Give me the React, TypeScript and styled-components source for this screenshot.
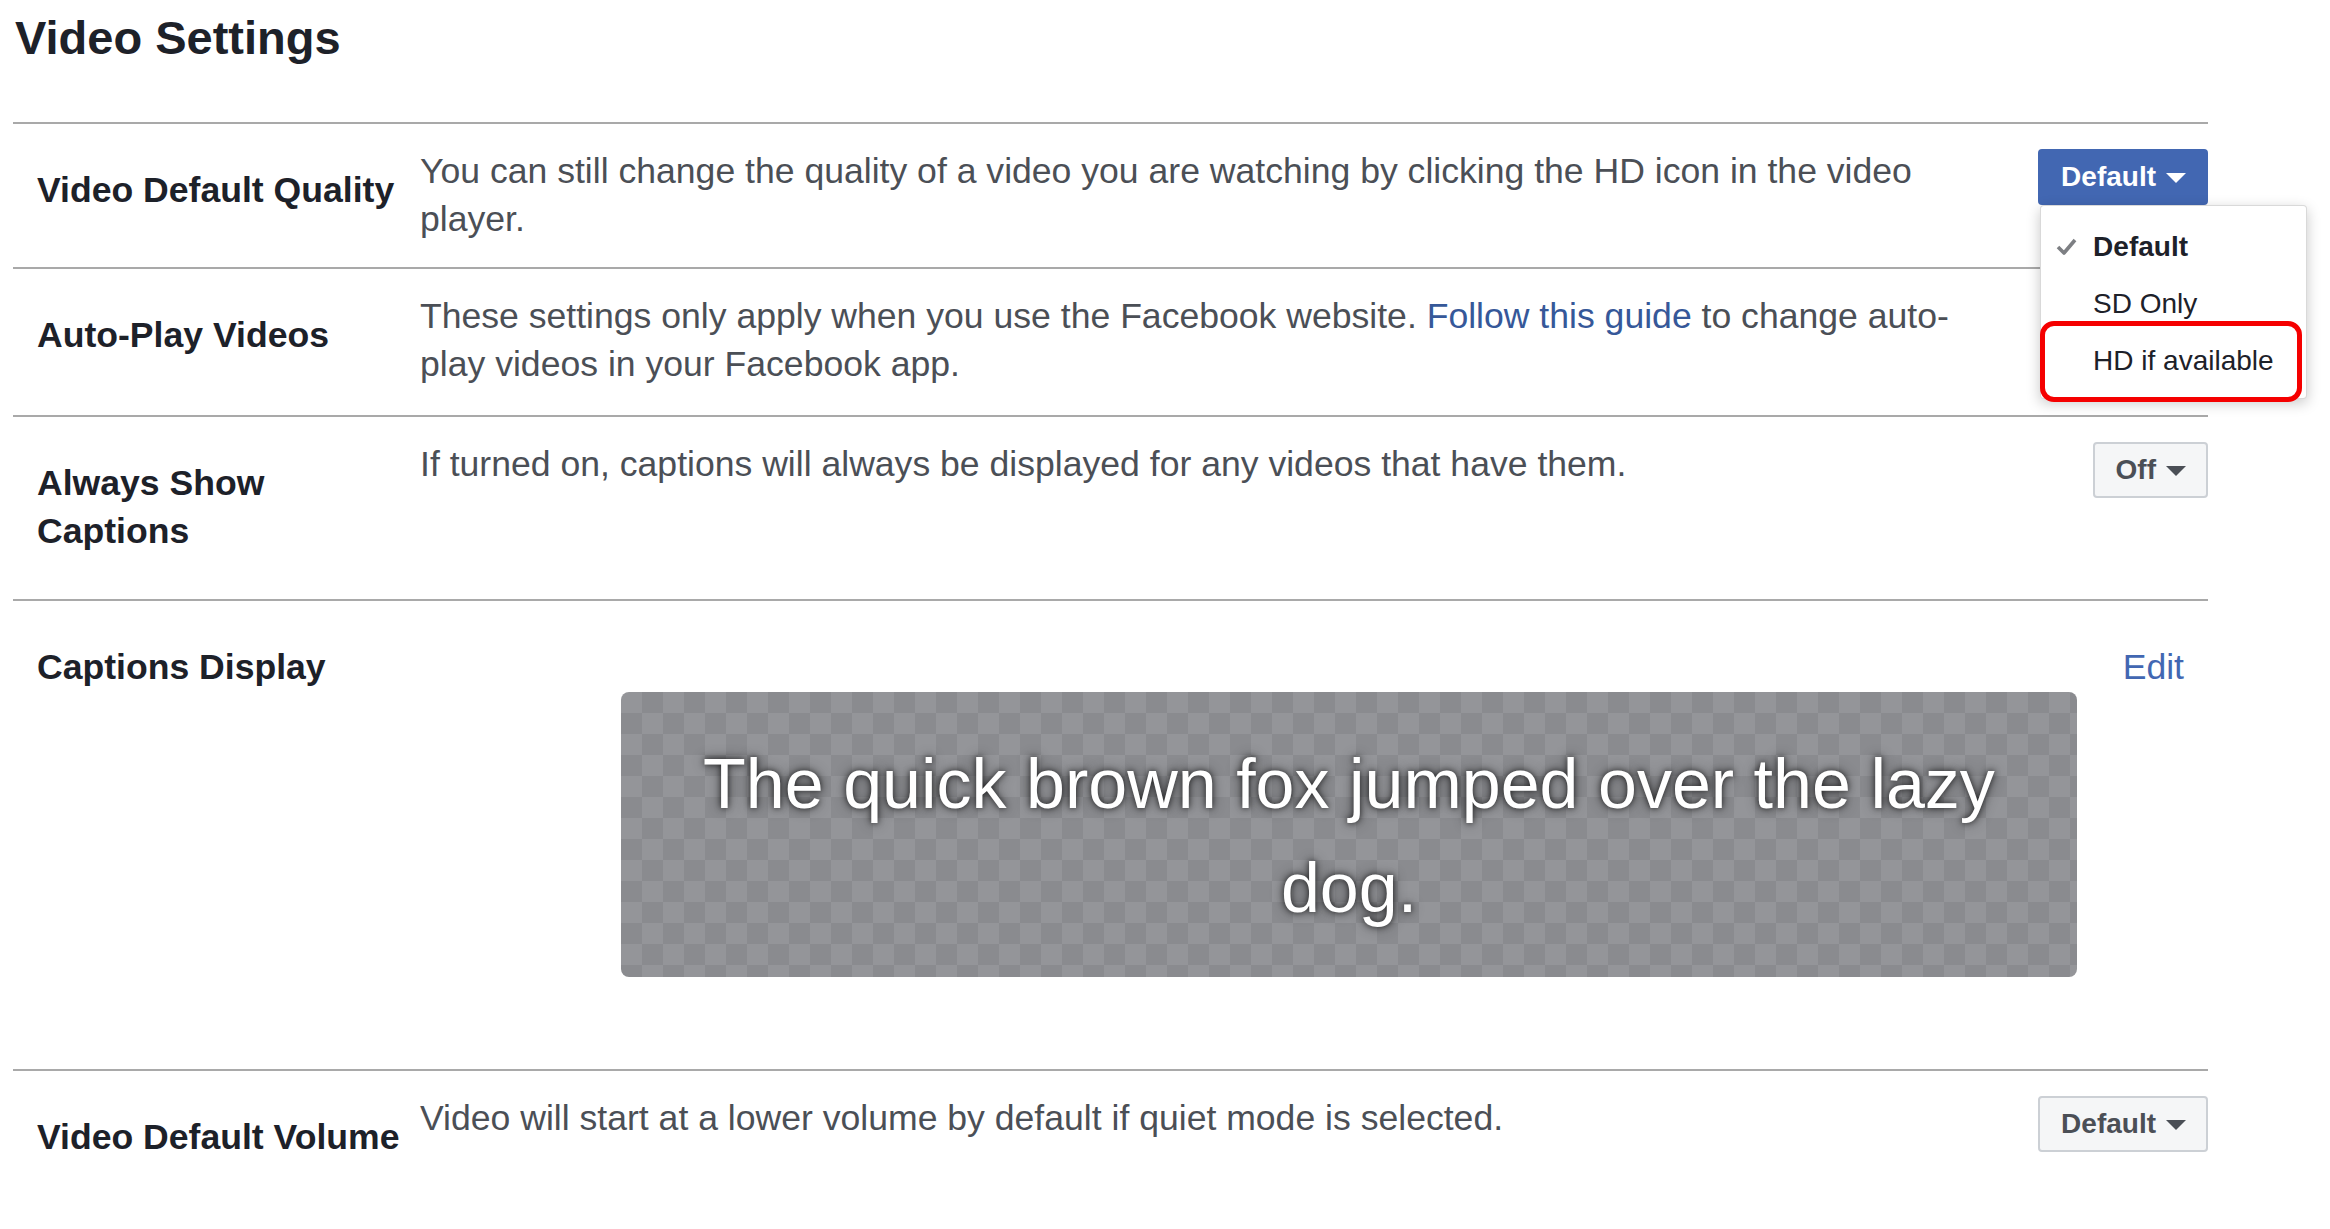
import React from 'react';
import styled, { createGlobalStyle } from 'styled-components';

const GlobalStyle = createGlobalStyle`
  html, body {
    margin: 0;
    padding: 0;
    background: #ffffff;
  }
  body {
    font-family: "Liberation Sans", Arial, Helvetica, sans-serif;
    color: #1d2129;
  }
`;

const Page = styled.div`
  width: 2195px;
  margin-left: 13px;
`;

const Title = styled.h1`
  margin: 10px 0 56px;
  padding-left: 2px;
  font-size: 47px;
  line-height: 56px;
  font-weight: 700;
  color: #1d2129;
`;

const Row = styled.div`
  display: grid;
  grid-template-columns: 407px 1570px 1fr;
  border-top: 2px solid #a9a9a9;
`;

const Label = styled.div`
  padding: 43px 0 44px 24px;
  font-size: 35.6px;
  line-height: 47.5px;
  font-weight: 700;
  color: #1d2129;
`;

const Description = styled.div<{ $bottom?: number }>`
  padding: 24px 0 ${p => p.$bottom ?? 24}px;
  font-size: 35.6px;
  line-height: 47.5px;
  color: #4b4f56;
`;

const Link = styled.a`
  color: #365899;
  text-decoration: none;
  cursor: pointer;
`;

const Control = styled.div`
  display: flex;
  justify-content: flex-end;
  align-items: flex-start;
  padding-top: 25px;
`;

const SelectWrap = styled.div`
  position: relative;
`;

const SelectButton = styled.button<{ $primary?: boolean }>`
  box-sizing: border-box;
  display: flex;
  align-items: center;
  gap: 10px;
  height: 56px;
  padding: 0 20px 0 21px;
  border-radius: 4px;
  border: 2px solid ${p => (p.$primary ? '#4267b2' : '#ccd0d5')};
  background: ${p => (p.$primary ? '#4267b2' : '#f5f6f7')};
  color: ${p => (p.$primary ? '#ffffff' : '#4b4f56')};
  font-family: "Liberation Sans", Arial, Helvetica, sans-serif;
  font-size: 28px;
  font-weight: 700;
  cursor: pointer;
`;

const Caret = styled.span`
  width: 0;
  height: 0;
  border-left: 10px solid transparent;
  border-right: 10px solid transparent;
  border-top: 10px solid currentColor;
  margin-top: 2px;
`;

const Menu = styled.div`
  position: absolute;
  top: 100%;
  left: 2px;
  z-index: 10;
  box-sizing: border-box;
  width: 267px;
  padding: 12px 0 9px;
  background: #ffffff;
  border: 1px solid rgba(0, 0, 0, 0.15);
  border-radius: 4px;
  box-shadow: 0 4px 14px rgba(0, 0, 0, 0.22);
`;

const MenuItem = styled.div<{ $active?: boolean }>`
  position: relative;
  height: 57px;
  display: flex;
  align-items: center;
  padding-left: 52px;
  font-size: 28px;
  font-weight: ${p => (p.$active ? 700 : 400)};
  color: #1d2129;
`;

const Check = styled.svg`
  position: absolute;
  left: 15px;
  top: 20px;
`;

const Highlight = styled.div`
  position: absolute;
  left: -1px;
  top: 115px;
  box-sizing: border-box;
  width: 262px;
  height: 81px;
  border: 5px solid #f50000;
  border-radius: 14px;
  pointer-events: none;
`;

const CaptionsRow = styled.div`
  border-top: 2px solid #a9a9a9;
  padding-bottom: 92px;
`;

const CaptionsHeader = styled.div`
  display: flex;
  justify-content: space-between;
  align-items: flex-start;
`;

const CaptionsLabel = styled(Label)`
  padding-bottom: 0;
`;

const EditLink = styled.a`
  padding: 43px 24px 0 0;
  font-size: 35.6px;
  line-height: 47.5px;
  color: #4267b2;
  text-decoration: none;
  cursor: pointer;
`;

const Preview = styled.div`
  box-sizing: border-box;
  width: 1456px;
  height: 285px;
  margin-left: 608px;
  padding: 40px 60px 0;
  border-radius: 8px;
  background: repeating-conic-gradient(#8a8b8f 0 25%, #949599 0 50%) 0 0 / 42px 42px;
  text-align: center;
  font-size: 70px;
  line-height: 104px;
  color: #ffffff;
  text-shadow: 0 0 6px rgba(0, 0, 0, 0.75), 0 0 14px rgba(0, 0, 0, 0.45);
`;

type Option = { label: string; active?: boolean };

const qualityOptions: Option[] = [
  { label: 'Default', active: true },
  { label: 'SD Only' },
  { label: 'HD if available' },
];

const QualityMenu: React.FC = () => (
  <Menu>
    {qualityOptions.map(opt => (
      <MenuItem key={opt.label} $active={opt.active}>
        {opt.active && (
          <Check width="21" height="17" viewBox="0 0 21 17">
            <path d="M2 9 L8 15 L19 2" fill="none" stroke="#7d7f83" strokeWidth="3.6" strokeLinejoin="round" />
          </Check>
        )}
        {opt.label}
      </MenuItem>
    ))}
    <Highlight />
  </Menu>
);

const Select: React.FC<{ value: string; primary?: boolean; open?: boolean }> = ({ value, primary, open }) => (
  <SelectWrap>
    <SelectButton $primary={primary}>
      <span>{value}</span>
      <Caret />
    </SelectButton>
    {open && <QualityMenu />}
  </SelectWrap>
);

export default function App() {
  return (
    <Page>
      <GlobalStyle />
      <Title>Video Settings</Title>

      <Row>
        <Label>Video Default Quality</Label>
        <Description>
          You can still change the quality of a video you are watching by clicking the HD icon in the video player.
        </Description>
        <Control>
          <Select value="Default" primary open />
        </Control>
      </Row>

      <Row>
        <Label>Auto-Play Videos</Label>
        <Description $bottom={27}>
          These settings only apply when you use the Facebook website. <Link>Follow this guide</Link> to change
          auto-play videos in your Facebook app.
        </Description>
        <Control />
      </Row>

      <Row>
        <Label>Always Show Captions</Label>
        <Description>If turned on, captions will always be displayed for any videos that have them.</Description>
        <Control>
          <Select value="Off" />
        </Control>
      </Row>

      <CaptionsRow>
        <CaptionsHeader>
          <CaptionsLabel>Captions Display</CaptionsLabel>
          <EditLink>Edit</EditLink>
        </CaptionsHeader>
        <Preview>The quick brown fox jumped over the lazy dog.</Preview>
      </CaptionsRow>

      <Row>
        <Label>Video Default Volume</Label>
        <Description>Video will start at a lower volume by default if quiet mode is selected.</Description>
        <Control>
          <Select value="Default" />
        </Control>
      </Row>
    </Page>
  );
}
